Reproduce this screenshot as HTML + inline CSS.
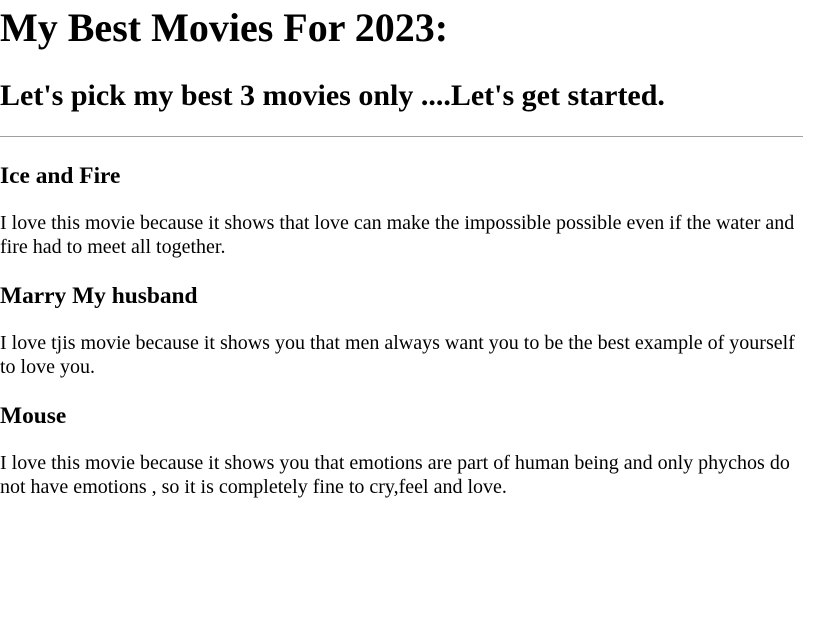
<!DOCTYPE html>
<html><head><meta charset="utf-8"><style>
body{margin:0;background:#fff;color:#000;font-family:"Liberation Serif",serif;width:814px;height:628px;position:relative;overflow:hidden}
div{position:absolute;left:0;white-space:nowrap}
.h1{font-size:40px;font-weight:bold;top:5px;line-height:46px}
.h2{font-size:30px;font-weight:bold;top:79px;line-height:34px}
.hr{top:136px;width:803px;height:0;border-top:1px solid #a0a0a0}
.h3{font-size:23.4px;font-weight:bold;line-height:26px}
.p{font-size:20px;line-height:24px;white-space:normal;width:805px}
</style></head><body>
<div class="h1">My Best Movies For 2023:</div>
<div class="h2">Let's pick my best 3 movies only ....Let's get started.</div>
<div class="hr"></div>
<div class="h3" style="top:163px">Ice and Fire</div>
<div class="p" style="top:211px">I love this movie because it shows that love can make the impossible possible even if the water and fire had to meet all together.</div>
<div class="h3" style="top:283px">Marry My husband</div>
<div class="p" style="top:331px">I love tjis movie because it shows you that men always want you to be the best example of yourself to love you.</div>
<div class="h3" style="top:403px">Mouse</div>
<div class="p" style="top:451px">I love this movie because it shows you that emotions are part of human being and only phychos do not have emotions , so it is completely fine to cry,feel and love.</div>
</body></html>
